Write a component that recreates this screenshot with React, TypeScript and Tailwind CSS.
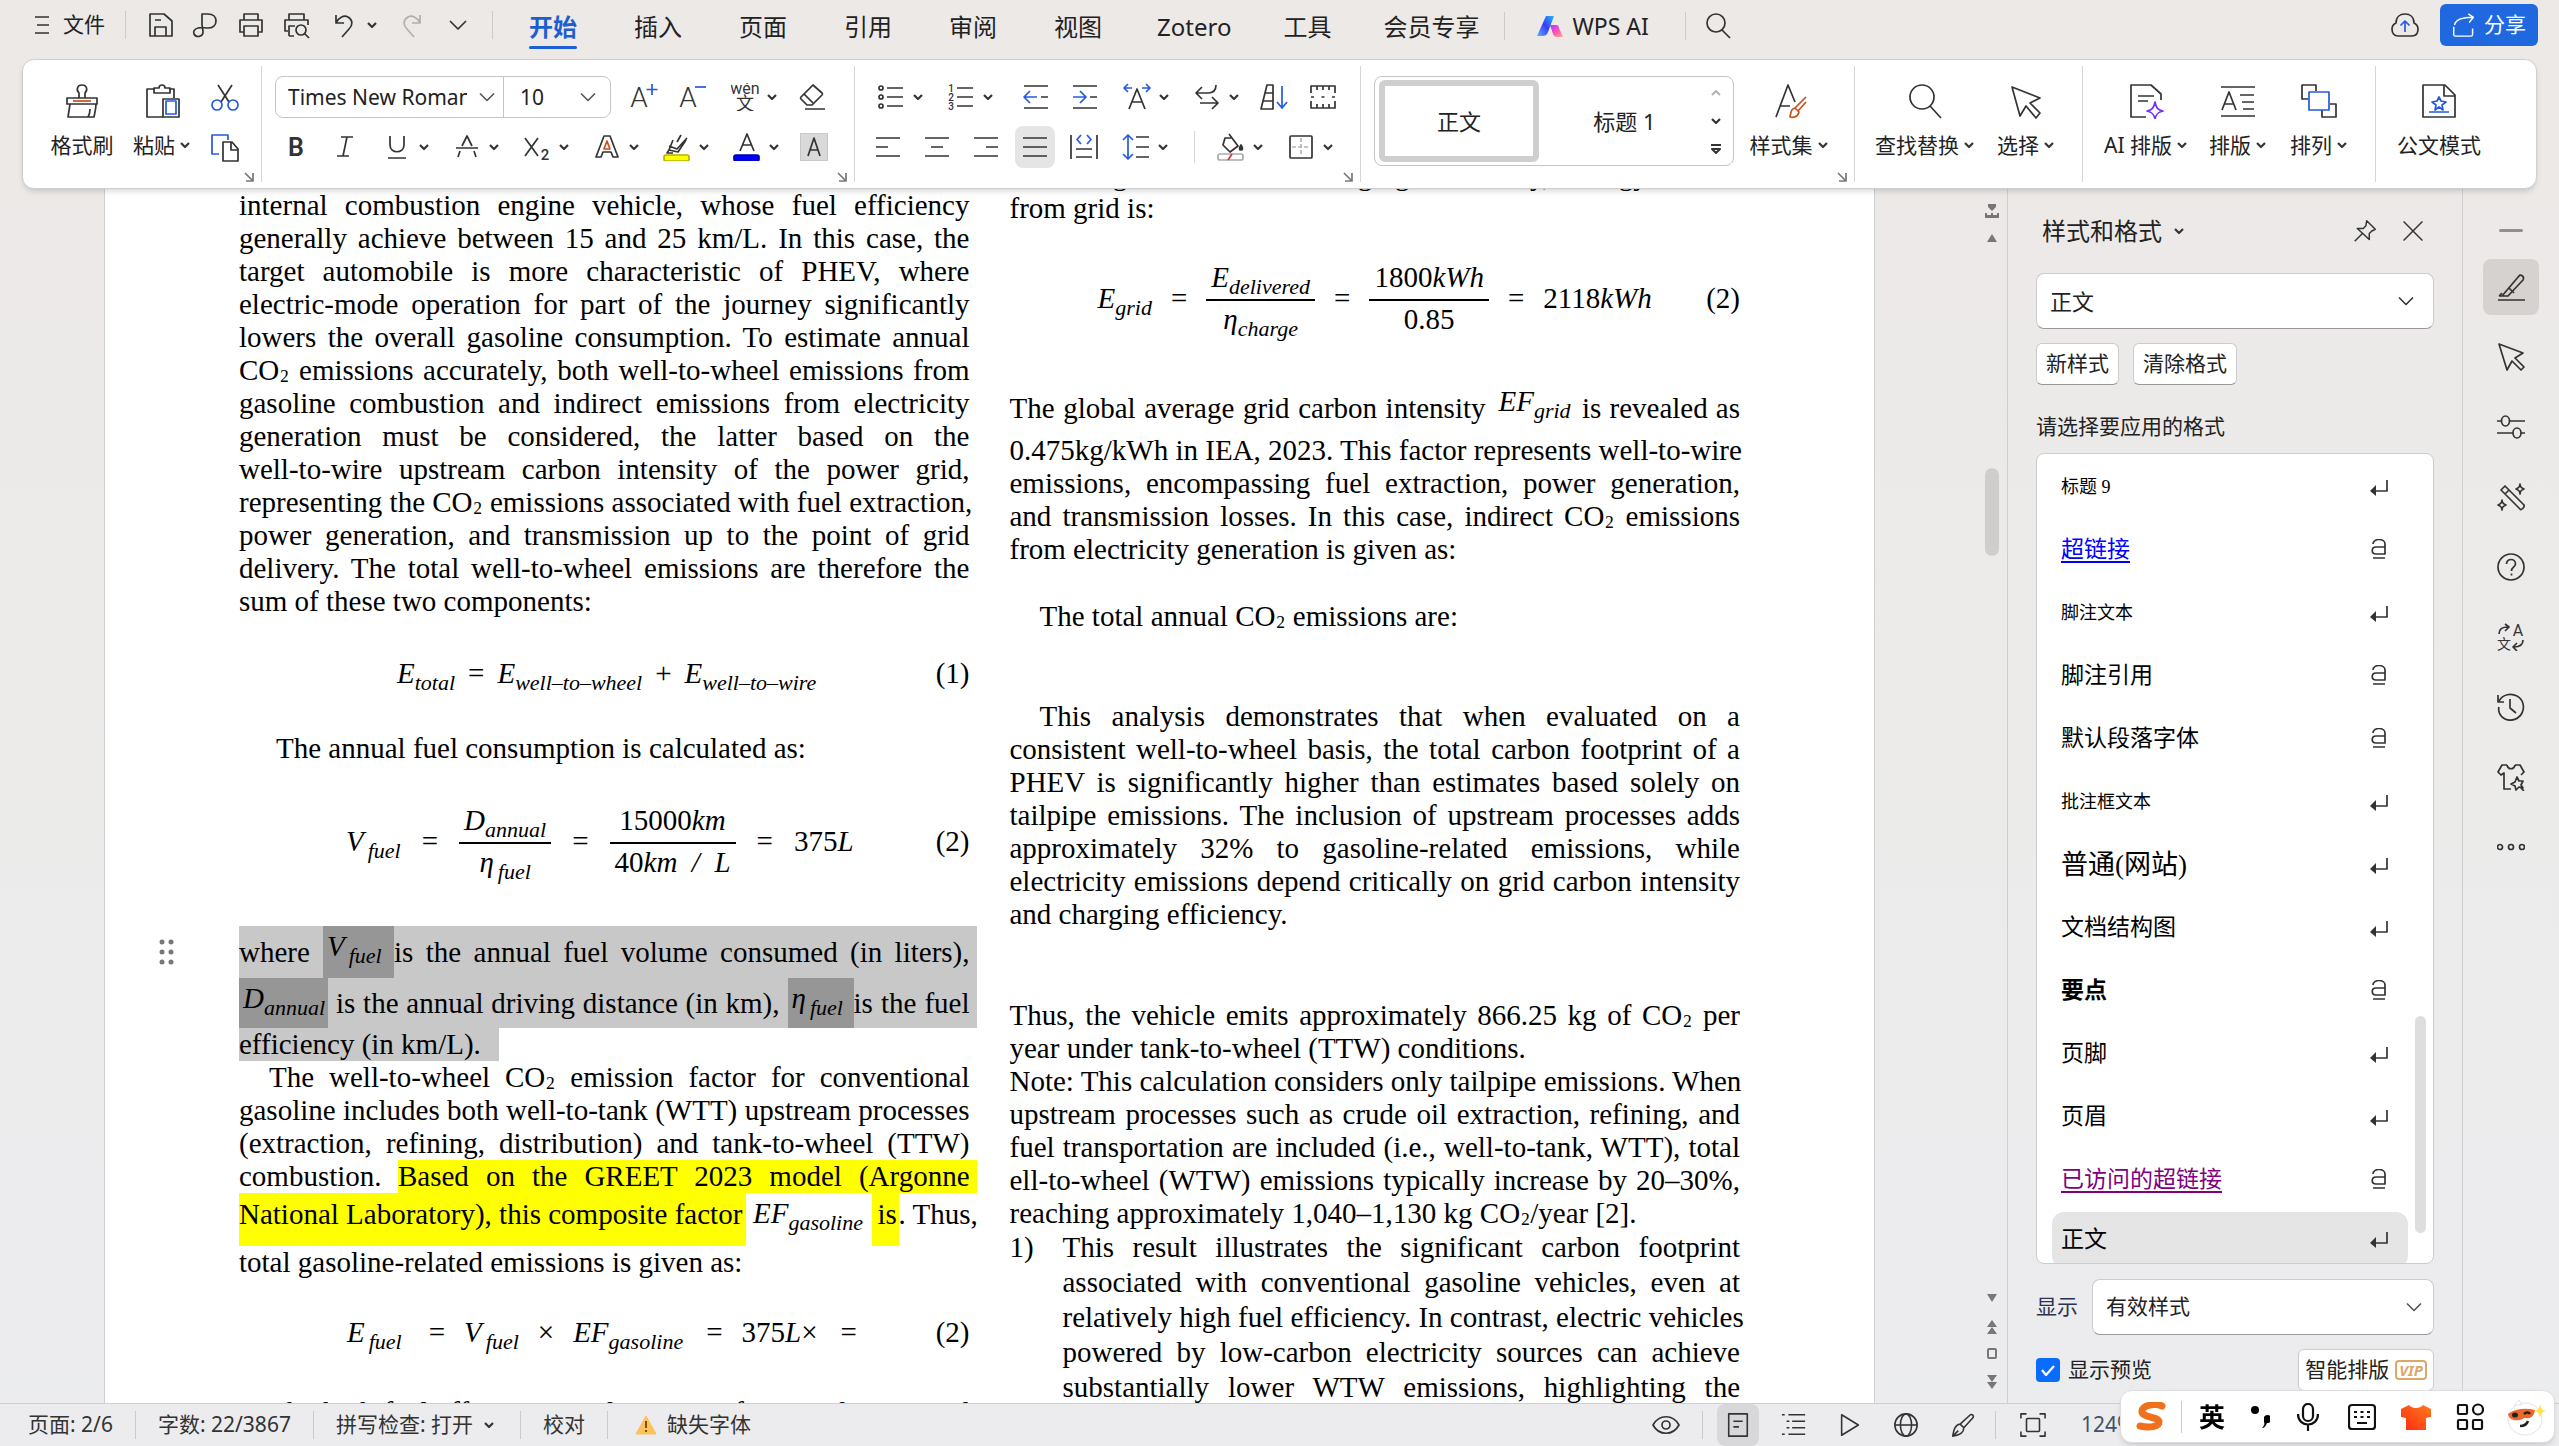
import React from 'react';
import clsx from 'clsx';

const INK = '#333333';
const BLUE = '#2459e0';

interface IconProps {
  children: React.ReactNode;
  box?: number;
  className?: string;
  stroke?: string;
  width?: number;
}

const Icon: React.FC<IconProps> = ({ children, box = 28, className = 'size-7', stroke = INK, width = 1.7 }) => (
  <svg
    viewBox={`0 0 ${box} ${box}`}
    className={clsx('shrink-0', className)}
    fill="none"
    stroke={stroke}
    strokeWidth={width}
    strokeLinejoin="round"
    aria-hidden="true"
  >
    {children}
  </svg>
);

interface GlyphProps {
  x: number;
  y: number;
  size: number;
  weight?: number;
  color?: string;
  children: string;
}

const Glyph: React.FC<GlyphProps> = ({ x, y, size, weight = 400, color = INK, children }) => (
  <text
    x={x}
    y={y}
    fontSize={size}
    fontWeight={weight}
    fill={color}
    stroke="none"
    textAnchor="middle"
    fontFamily="Roboto, 'Noto Sans CJK SC', sans-serif"
  >
    {children}
  </text>
);

const Caret = () => (
  <Icon box={12} className="size-3" width={2.2}>
    <path d="M2 4l4 4 4-4" />
  </Icon>
);

const Chevron = ({ color = '#555555' }: { color?: string }) => (
  <Icon box={16} className="size-4" stroke={color} width={1.6}>
    <path d="M1 4.500l7 7 7-7" />
  </Icon>
);

/* ---------- small toolbar icons ---------- */

const icons = {
  save: (
    <>
      <path d="M3 3h14l8 7v15H3z" />
      <path d="M8 25v-9h11v9M8 9h6" />
    </>
  ),
  brandP: <path d="M11 13V3h6c5 0 8 3 8 7s-3 7-8 7c-4 0-6-1-10 0s-5 4-4 6c2 4 9 3 9-2 0-3-1-5-1-8" />,
  print: (
    <>
      <path d="M7 9V3h14v6M7 21H3V9h22v12h-4" />
      <path d="M7 15h14v10H7z" />
    </>
  ),
  preview: (
    <>
      <path d="M6 9V3h15v6M5 20H2V9h23v5M6 25v-10h6M6 25h5" />
      <circle cx="18" cy="19" r="5" />
      <path d="M21.500 22.500L26 27" />
    </>
  ),
  undo: <path d="M6 4v8h8M6 12c3-6 8-8 12-6 5 3 5 8 1 12l-7 8" />,
  redo: <path d="M22 4v8h-8M22 12C19 6 14 4 10 6c-5 3-5 8-1 12l7 8" />,
  down: <path d="M6 10l8 8 8-8" />,
  search: (
    <>
      <circle cx="12" cy="11" r="9" />
      <path d="M18 18l8 8" />
    </>
  ),
  cut: (
    <>
      <path d="M7 1l11 17M21 1L10 18" />
      <g stroke={BLUE}>
        <circle cx="6" cy="21" r="5" />
        <circle cx="22" cy="21" r="5" />
      </g>
    </>
  ),
  copy: (
    <>
      <path d="M8 20H1V1h16v5" stroke={BLUE} />
      <path d="M12 8h9l6 7v12H12z" />
      <path d="M20 8v8h7" />
    </>
  ),
  grow: (
    <>
      <Glyph x={9} y={24} size={28} weight={300}>A</Glyph>
      <path d="M22 1v11M16.500 6.500h11" stroke={BLUE} />
    </>
  ),
  shrink: (
    <>
      <Glyph x={9} y={24} size={28} weight={300}>A</Glyph>
      <path d="M16 4h11" stroke={BLUE} />
    </>
  ),
  pinyin: (
    <>
      <Glyph x={14} y={11} size={16}>wén</Glyph>
      <Glyph x={14} y={27} size={18}>文</Glyph>
    </>
  ),
  eraser: (
    <>
      <path d="M15 2l9 8c1 1 1 1 0 2L14 22h-5l-6-6c-1-1-1-1 0-2z" />
      <path d="M6 11l9 9M7 26h20" />
    </>
  ),
  bold: <Glyph x={14} y={23} size={25} weight={600}>B</Glyph>,
  italic: <path d="M10 4h12M6 23h12M16 4l-4 19" />,
  underline: <path d="M7 3v9c0 9 14 9 14 0V3M5 25h18" />,
  strike: <path d="M9 13l5-10 5 10M3 15h22M7 18l-2 6M21 18l2 6" />,
  subscript: (
    <>
      <path d="M2 5l13 18M15 5L2 23" />
      <Glyph x={22} y={27} size={15} weight={500}>2</Glyph>
    </>
  ),
  effect: (
    <>
      <path d="M11 3h6l8 21h-5l-2-5H10l-2 5H3z" />
      <path d="M11 16l3-8 3 8z" stroke="#c8501b" />
    </>
  ),
  highlight: (
    <>
      <path d="M6 13l8 3 10-11M10 7L6 17l9 2 8-12M14 9l4-7M6 17l-2 3h6" />
      <rect x="1" y="22" width="25" height="6" rx="2" fill="#ffff00" stroke="#b5b500" />
    </>
  ),
  fontColor: (
    <>
      <path d="M7 18l7-17 7 17M9.500 12h9" />
      <rect x="1" y="22" width="25" height="6" rx="2" fill="#0000ff" stroke="#0000b0" />
    </>
  ),
  shade: (
    <>
      <rect width="28" height="28" rx="1" fill="#d9d9d9" stroke="#c4c4c4" />
      <path d="M8 23l6-18 6 18M10 17h8" />
    </>
  ),
  bullets: (
    <>
      <circle cx="4" cy="5" r="2" />
      <circle cx="4" cy="14" r="2" />
      <circle cx="4" cy="23" r="2" />
      <path d="M10 5h16M10 14h16M10 23h16" />
    </>
  ),
  numbers: (
    <>
      <Glyph x={4} y={9} size={10} weight={500}>1</Glyph>
      <Glyph x={4} y={18} size={10} weight={500}>2</Glyph>
      <Glyph x={4} y={27} size={10} weight={500}>3</Glyph>
      <path d="M10 5h16M10 14h16M10 23h16" />
    </>
  ),
  outdent: (
    <>
      <path d="M2 3h24M2 25h24M19 14h7" />
      <path d="M15 14H3M8 8l-6 6 6 6" stroke={BLUE} />
    </>
  ),
  indent: (
    <>
      <path d="M2 3h24M2 25h24M19 14h7" />
      <path d="M2 14h12M9 8l6 6-6 6" stroke={BLUE} />
    </>
  ),
  stretch: (
    <>
      <path d="M6 26l8-20 8 20M9 19h10" />
      <path d="M1 5h8M5 1L1 5l4 4M27 5h-8M23 1l4 4-4 4" stroke={BLUE} />
    </>
  ),
  direction: <path d="M23 2c0 6-3 8-8 8H4M9 4l-6 6 6 6M7 20h17M19 14l6 6-6 6" />,
  sort: (
    <>
      <path d="M1 26L7 2h6v24zM5 10h8M3 18h10" />
      <path d="M22 3v22M17 19l5 6 5-6" stroke={BLUE} />
    </>
  ),
  ruler: (
    <>
      <path d="M2 10V3h24v7M2 18v7h24v-7M8 3v4M14 3v4M20 3v4M8 25v-4M14 25v-4M20 25v-4" />
      <path d="M2 14h3M12.500 14h3M23 14h3" />
    </>
  ),
  left: <path d="M2 5h24M2 14h12M2 23h24" />,
  center: <path d="M2 5h24M8 14h12M2 23h24" />,
  right: <path d="M2 5h24M14 14h12M2 23h24" />,
  justify: <path d="M2 5h24M2 14h24M2 23h24" />,
  distribute: (
    <>
      <path d="M1 2v24M27 2v24M6 16h16M6 24h16" />
      <path d="M11 2L7 6.500l4 4.500M17 2l4 4.500-4 4.500" stroke={BLUE} />
    </>
  ),
  spacing: (
    <>
      <path d="M14 4h13M14 14h13M14 24h13" />
      <path d="M6 2v24M1 7l5-5 5 5M1 21l5 5 5-5" stroke={BLUE} />
    </>
  ),
  fill: (
    <>
      <path d="M8 5h7l6 8-8 6-7-7zM12 1l3 4" />
      <path d="M24 12c2 3 2 5 0 5s-2-2 0-5z" fill={INK} />
      <rect x="1" y="21" width="25" height="6" rx="2" stroke="#aaaaaa" />
      <path d="M11 27l4-6" stroke="#d33333" />
    </>
  ),
  border: (
    <>
      <rect x="3" y="3" width="22" height="22" rx="1" />
      <path d="M14 5v18M5 14h18" stroke="#b5b5b5" strokeDasharray="4 2" />
    </>
  ),
};

type IconName = keyof typeof icons;

/* ---------- ribbon ---------- */

interface ToolProps {
  name: IconName;
  label: string;
  caret?: boolean;
  active?: boolean;
}

const Tool: React.FC<ToolProps> = ({ name, label, caret, active }) =>
  caret ? (
    <button type="button" aria-label={label} className="flex h-[42px] w-[70px] shrink-0 items-center gap-[7px] pl-[14px]">
      <Icon>{icons[name]}</Icon>
      <Caret />
    </button>
  ) : (
    <button type="button" aria-label={label} className="flex h-[42px] w-[49px] shrink-0 items-center justify-center">
      <span className={clsx('flex h-[42px] w-10 items-center justify-center rounded-lg', active && 'bg-[#e5e5e5]')}>
        <Icon>{icons[name]}</Icon>
      </span>
    </button>
  );

interface BigToolProps {
  label: string;
  caret?: boolean;
  className?: string;
  children: React.ReactNode;
}

const BigTool: React.FC<BigToolProps> = ({ label, caret, className, children }) => (
  <button type="button" className={clsx('flex shrink-0 flex-col items-center gap-2', className)}>
    <Icon box={36} className="size-9">{children}</Icon>
    <span className="flex items-center gap-1 whitespace-nowrap leading-[36px]">
      {label}
      {caret && <Caret />}
    </span>
  </button>
);

const Launcher = () => (
  <button type="button" aria-label="更多设置" className="absolute right-2 bottom-[6px]">
    <Icon box={10} className="size-[10px]" stroke="#777777">
      <path d="M1 1l7 7M9 1v8H2" />
    </Icon>
  </button>
);

const Group: React.FC<{ children: React.ReactNode; className?: string; launcher?: boolean }> = ({
  children,
  className,
  launcher,
}) => (
  <div className="relative flex shrink-0">
    <div className={clsx('flex', className)}>{children}</div>
    {launcher && <Launcher />}
    <div className="my-[6px] w-px bg-[#d5d5d5]" />
  </div>
);

const Ribbon = () => (
  <section
    aria-label="开始"
    className="relative z-10 mx-[22px] flex h-[130px] shrink-0 rounded-xl border border-[#cfcfcf] bg-white text-[21px] text-[#222222] shadow-md"
  >
    <Group className="w-[238px] pt-[23px] pl-6" launcher>
      <BigTool label="格式刷" className="w-[70px]">
        <path d="M15 15V10c-3-3-2-8 3-8s6 5 3 8v5M3 15h30v6H3zM6 21L4 34h26c1-5 2-9 2-13M24 34c2-3 2-5 2-8" />
        <path d="M9 18h18" stroke="#c8501b" />
      </BigTool>
      <BigTool label="粘贴" caret className="ml-[7px] w-[76px]">
        <path d="M11 6H3v28h16M25 6h5v9" />
        <path d="M10 10V5h5c0-4 6-4 6 0h5v5z" />
        <path d="M19 16h16v18H19z" />
        <rect x="22" y="18" width="10" height="13" stroke={BLUE} />
      </BigTool>
      <div className="-mt-[6px] flex flex-col gap-2">
        <Tool name="cut" label="剪切" />
        <Tool name="copy" label="复制" />
      </div>
    </Group>

    <Group className="w-[592px] flex-col gap-2 pt-[16px] pl-[9px]" launcher>
      <div className="flex items-center">
        <div className="mr-2 ml-1 flex h-[42px] w-[336px] items-center rounded-lg border border-[#c4c4c4]">
          <input
            aria-label="字体"
            defaultValue="Times New Roman"
            className="mr-1 ml-3 h-full w-[179px] bg-transparent outline-none"
          />
          <span className="ml-2">
            <Chevron />
          </span>
          <span className="ml-2 h-full w-px bg-[#c4c4c4]" />
          <input aria-label="字号" defaultValue="10" className="ml-4 h-full w-14 bg-transparent outline-none" />
          <span className="ml-1">
            <Chevron />
          </span>
        </div>
        <Tool name="grow" label="增大字号" />
        <Tool name="shrink" label="减小字号" />
        <Tool name="pinyin" label="拼音指南" caret />
        <Tool name="eraser" label="清除格式" />
      </div>
      <div className="flex items-center">
        <Tool name="bold" label="加粗" />
        <Tool name="italic" label="倾斜" />
        <Tool name="underline" label="下划线" caret />
        <Tool name="strike" label="删除线" caret />
        <Tool name="subscript" label="下标" caret />
        <Tool name="effect" label="文字效果" caret />
        <Tool name="highlight" label="突出显示" caret />
        <Tool name="fontColor" label="字体颜色" caret />
        <Tool name="shade" label="字符底纹" />
      </div>
    </Group>

    <Group className="w-[505px] flex-col gap-2 pt-[16px] pl-2" launcher>
      <div className="flex items-center">
        <Tool name="bullets" label="项目符号" caret />
        <Tool name="numbers" label="编号" caret />
        <span className="w-2" />
        <Tool name="outdent" label="减少缩进量" />
        <Tool name="indent" label="增加缩进量" />
        <Tool name="stretch" label="中文版式" caret />
        <Tool name="direction" label="换行" caret />
        <Tool name="sort" label="排序" />
        <Tool name="ruler" label="制表位" />
      </div>
      <div className="flex items-center">
        <Tool name="left" label="左对齐" />
        <Tool name="center" label="居中" />
        <Tool name="right" label="右对齐" />
        <Tool name="justify" label="两端对齐" active />
        <Tool name="distribute" label="分散对齐" />
        <Tool name="spacing" label="行距" caret />
        <span className="mr-2 ml-4 h-8 w-px bg-[#d5d5d5]" />
        <Tool name="fill" label="底纹颜色" caret />
        <Tool name="border" label="边框" caret />
      </div>
    </Group>

    <Group className="w-[493px] pt-[16px] pl-[13px]" launcher>
      <div className="flex h-[90px] w-[360px] items-center rounded-lg border border-[#c4c4c4] pl-1">
        <button type="button" className="h-[82px] w-[160px] rounded-md border-[6px] border-[#cfcfcf] text-[22px]">
          正文
        </button>
        <button type="button" className="w-[171px] text-[22px]">标题 1</button>
        <div className="flex h-full flex-col items-center justify-between py-[10px]">
          <Icon box={12} className="size-3" stroke="#b5b5b5" width={2.2}>
            <path d="M2 8l4-4 4 4" />
          </Icon>
          <Caret />
          <Icon box={12} className="size-3" width={2}>
            <path d="M1 2h10M2 6h8l-4 4z" />
          </Icon>
        </div>
      </div>
      <BigTool label="样式集" caret className="ml-[10px] w-[90px] pt-[7px]">
        <path d="M5 34L17 2l7 17M9 23h10" />
        <path d="M35 14L24 25M35 19L27 28M24 25l4 4c-1 4-4 6-9 5 1-5 1-8 5-9z" stroke="#c8501b" />
      </BigTool>
    </Group>

    <Group className="w-[227px] pt-[23px] pl-[17px]">
      <BigTool label="查找替换" caret className="w-[106px]">
        <circle cx="15" cy="14" r="12" />
        <path d="M23 23l11 12" />
      </BigTool>
      <BigTool label="选择" caret className="ml-[13px] w-[70px]">
        <path d="M4 4l28 11-10 5 10 10-4 5-10-12-6 10z" />
      </BigTool>
    </Group>

    <Group className="w-[292px] pt-[23px] pl-4">
      <BigTool label="AI 排版" caret className="w-[94px]">
        <path d="M18 34H3V2h20l10 9v6M10 13h16M10 18h10" />
        <path d="M27 19c1 6 3 8 8 9-5 1-7 3-8 8-1-5-3-7-8-8 5-1 7-3 8-9z" stroke="#7a2cf0" />
      </BigTool>
      <BigTool label="排版" caret className="ml-[10px] w-[70px]">
        <path d="M1 4h34M1 33h34M20 12h14M22 19h12M23 26h11M2 27L9 9l7 18M5 21h8" />
      </BigTool>
      <BigTool label="排列" caret className="ml-[9px] w-[74px]">
        <path d="M7 16H1V2h14v6M29 21h6v13H21v-7" />
        <rect x="8" y="9" width="20" height="18" stroke={BLUE} />
      </BigTool>
    </Group>

    <div className="flex flex-1 pt-[23px] pl-[19px]">
      <BigTool label="公文模式" className="w-[88px]">
        <path d="M2 2h22l10 10v22H2zM23 2v11h11" />
        <path d="M18 14l2 4 5 1-4 3 1 5-4-3-4 3 1-5-4-3 5-1zM8 29h20" stroke={BLUE} />
      </BigTool>
    </div>
  </section>
);

/* ---------- title bar ---------- */

const VLine = ({ className }: { className?: string }) => (
  <span className={clsx('h-7 w-px shrink-0 bg-[#cbcbcb]', className)} />
);

interface QuickButtonProps {
  name: IconName;
  label: string;
  className?: string;
  color?: string;
}

const QuickButton: React.FC<QuickButtonProps> = ({ name, label, className, color }) => (
  <button type="button" aria-label={label} className={className}>
    <Icon stroke={color}>{icons[name]}</Icon>
  </button>
);

const tabs = ['开始', '插入', '页面', '引用', '审阅', '视图', 'Zotero', '工具', '会员专享'];

const TitleBar = () => (
  <header className="flex h-[59px] shrink-0 items-start text-[#222222]">
    <div className="flex h-[50px] items-center">
      <button type="button" className="ml-[34px] flex items-center gap-[13px] text-[21px]">
        <Icon box={16} className="size-4 overflow-visible" width={1.7}>
          <path d="M1 0h14M3 8h12M1 16h14" />
        </Icon>
        文件
      </button>
      <VLine className="ml-5" />
      <QuickButton name="save" label="保存" className="ml-[21px]" />
      <QuickButton name="brandP" label="输出为PDF" className="ml-4" />
      <QuickButton name="print" label="打印" className="ml-[18px]" />
      <QuickButton name="preview" label="打印预览" className="ml-[18px]" />
      <QuickButton name="undo" label="撤销" className="ml-[19px]" />
      <span className="ml-2">
        <Caret />
      </span>
      <QuickButton name="redo" label="恢复" className="ml-5" color="#b0b0b0" />
      <QuickButton name="down" label="自定义快速访问工具栏" className="ml-[18px]" />
      <VLine className="ml-[20px]" />
    </div>
    <nav className="flex pl-[7px]">
      {tabs.map((tab, i) => (
        <button
          key={tab}
          type="button"
          className={clsx('flex flex-col items-center pt-2', i < 6 ? 'pr-[28px] pl-[29px]' : 'pr-[25px] pl-[27px]')}
        >
          <span className={clsx('text-[24px] leading-[38px]', i === 0 && 'font-bold text-[#1d5fd0]')}>{tab}</span>
          {i === 0 && <span className="h-[3px] w-full rounded-full bg-[#1d5fd0]" />}
        </button>
      ))}
    </nav>
    <div className="flex h-[52px] items-center">
      <VLine />
      <button type="button" className="ml-[31px] flex items-center gap-2 text-[23px]">
        <svg viewBox="0 0 28 22" className="h-[22px] w-7" aria-hidden="true">
          <defs>
            <linearGradient id="aiLeft" x1="1" y1="0" x2="0" y2="1">
              <stop offset="0" stopColor="#22b8ff" />
              <stop offset="0.500" stopColor="#3a3cf5" />
              <stop offset="1" stopColor="#5db2ff" />
            </linearGradient>
            <linearGradient id="aiRight" x1="0" y1="0" x2="1" y2="1">
              <stop offset="0" stopColor="#a63cf8" />
              <stop offset="0.500" stopColor="#ff4fc0" />
              <stop offset="1" stopColor="#ffb27a" />
            </linearGradient>
          </defs>
          <path d="M10 1h8l-6 16c-1 3-3 4-6 4H1z" fill="url(#aiLeft)" />
          <path d="M14 10h6c2 0 3 1 3 3l4 9h-6c-2 0-3-1-4-3z" fill="url(#aiRight)" />
        </svg>
        WPS AI
      </button>
      <VLine className="ml-[36px]" />
      <QuickButton name="search" label="搜索" className="ml-[18px]" />
    </div>
    <div className="mt-1 mr-[21px] ml-auto flex h-[42px] items-center gap-[21px]">
      <button type="button" aria-label="云同步">
        <Icon>
          <path d="M7 25c-4 0-6-3-6-7 0-3 2-5 4-6 0-6 4-9 9-9s9 3 9 9c2 1 4 3 4 6 0 4-2 7-6 7z" />
          <path d="M14 21V10M9.500 14.500L14 10l4.500 4.500" stroke={BLUE} />
        </Icon>
      </button>
      <button type="button" className="flex h-[42px] w-[98px] items-center justify-center gap-2 rounded-md bg-[#1f68e0] text-[21px] text-white">
        <Icon className="size-6" stroke="#ffffff">
          <path d="M2 16v9c0 1 1 2 2 2h18c1 0 2-1 2-2v-7M3 14c1-6 8-9 22-9M19 1l6 4-5 6" />
        </Icon>
        分享
      </button>
    </div>
  </header>
);

/* ---------- document ---------- */

// The small two in CO₂ sits on the baseline instead of hanging below it.
const withCo2 = (text: string) =>
  text.split('₂').map((part, i) => (
    <React.Fragment key={i}>
      {i > 0 && <span className="relative -top-1">₂</span>}
      {part}
    </React.Fragment>
  ));

const Line: React.FC<{ children: React.ReactNode; last?: boolean; indent?: boolean; className?: string }> = ({
  children,
  last,
  indent,
  className,
}) => (
  <span className={clsx('block whitespace-nowrap', !last && 'text-justify [text-align-last:justify]', indent && 'pl-[30px]', className)}>
    {typeof children === 'string' ? withCo2(children) : children}
  </span>
);

const Lines: React.FC<{ rows: string[]; indent?: boolean; open?: boolean; className?: string }> = ({
  rows,
  indent,
  open,
  className,
}) => (
  <p className={className}>
    {rows.map((row, i) => (
      <Line key={row} indent={indent && i === 0} last={!open && i === rows.length - 1}>
        {row}
      </Line>
    ))}
  </p>
);

const Sym: React.FC<{ base: string; sub?: string; wide?: boolean }> = ({ base, sub, wide }) => (
  <span className="whitespace-nowrap italic">
    {base}
    {sub && <sub className={clsx('bottom-[-7px] text-[22px]', wide && 'ml-1')}>{sub}</sub>}
  </span>
);

const Frac: React.FC<{ top: React.ReactNode; bottom: React.ReactNode }> = ({ top, bottom }) => (
  <span className="flex flex-col items-center">
    <span className="px-[5px] pb-[5px]">{top}</span>
    <span className="h-[2px] w-full bg-black" />
    <span className="px-[5px] pt-[2px]">{bottom}</span>
  </span>
);

const Equation: React.FC<{ n: number; className: string; children: React.ReactNode }> = ({ n, className, children }) => (
  <div className={clsx('flex items-center', className)}>
    {children}
    <span className="ml-auto">({n})</span>
  </div>
);

const LeftColumn = () => (
  <div className="min-w-0">
    <Lines
      rows={[
        'internal combustion engine vehicle, whose fuel efficiency',
        'generally achieve between 15 and 25 km/L. In this case, the',
        'target automobile is more characteristic of PHEV, where',
        'electric-mode operation for part of the journey significantly',
        'lowers the overall gasoline consumption. To estimate annual',
        'CO₂ emissions accurately, both well-to-wheel emissions from',
        'gasoline combustion and indirect emissions from electricity',
        'generation must be considered, the latter based on the',
        'well-to-wire upstream carbon intensity of the power grid,',
        'representing the CO₂ emissions associated with fuel extraction,',
        'power generation, and transmission up to the point of grid',
        'delivery. The total well-to-wheel emissions are therefore the',
        'sum of these two components:',
      ]}
    />
    <Equation n={1} className="h-[114px] gap-[13px] pb-1 pl-[158px]">
      <Sym base="E" sub="total" />
      <span>=</span>
      <Sym base="E" sub="well–to–wheel" />
      <span>+</span>
      <Sym base="E" sub="well–to–wire" />
    </Equation>
    <p className="pl-[37px]">The annual fuel consumption is calculated as:</p>
    <Equation n={2} className="h-[161px] gap-[21px] pb-2 pl-[107px]">
      <Sym base="V" sub="fuel" wide />
      <span>=</span>
      <Frac top={<Sym base="D" sub="annual" />} bottom={<Sym base="η" sub="fuel" wide />} />
      <span>=</span>
      <Frac
        top={<>15000<i>km</i></>}
        bottom={<>40<i>km&nbsp; /&nbsp; L</i></>}
      />
      <span>=</span>
      <span>375<i>L</i></span>
    </Equation>

    <div className="relative -mr-[7px]">
      <button type="button" aria-label="段落" className="absolute top-3 -left-[80px]">
        <svg viewBox="0 0 16 28" className="h-7 w-4 fill-[#777777]" aria-hidden="true">
          <circle cx="3" cy="4" r="2.500" />
          <circle cx="12" cy="4" r="2.500" />
          <circle cx="3" cy="14" r="2.500" />
          <circle cx="12" cy="14" r="2.500" />
          <circle cx="3" cy="24" r="2.500" />
          <circle cx="12" cy="24" r="2.500" />
        </svg>
      </button>
      <div className="flex h-[52px] bg-[#c8c8c8]">
        <span className="w-[84px] pt-[10px]">where</span>
        <span className="w-[71px] bg-[#969696] pt-1 pl-1">
          <Sym base="V" sub="fuel" wide />
        </span>
        <Line className="flex-1 pt-[10px] pr-[7px]">is the annual fuel volume consumed (in liters),</Line>
      </div>
      <div className="flex h-[50px] bg-[#c8c8c8]">
        <span className="w-[89px] bg-[#969696] pt-1 pl-1">
          <Sym base="D" sub="annual" />
        </span>
        <Line className="flex-1 pt-[9px] pr-2 pl-2">is the annual driving distance (in km),</Line>
        <span className="w-[66px] bg-[#969696] pt-1 pl-1">
          <Sym base="η" sub="fuel" wide />
        </span>
        <Line className="w-[123px] pt-[9px] pr-[7px]">is the fuel</Line>
      </div>
      <p className="w-[260px] whitespace-nowrap bg-[#c8c8c8]">efficiency (in km/L).</p>
    </div>

    <Lines
      indent
      open
      rows={[
        'The well-to-wheel CO₂ emission factor for conventional',
        'gasoline includes both well-to-tank (WTT) upstream processes',
        '(extraction, refining, distribution) and tank-to-wheel (TTW)',
      ]}
    />
    <div className="-mr-[7px] flex">
      <span className="w-[159px]">combustion.</span>
      <mark className="flex-1 bg-[#ffff00] pr-[7px] text-black">
        <Line>Based on the GREET 2023 model (Argonne</Line>
      </mark>
    </div>
    <div className="-mr-[7px] flex h-[53px] whitespace-nowrap">
      <mark className="w-[507px] bg-[#ffff00] pt-[5px] text-black">National Laboratory), this composite factor</mark>
      <span className="flex-1 pt-1 pl-[7px]">
        <Sym base="EF" sub="gasoline" />
      </span>
      <mark className="w-[27px] bg-[#ffff00] pt-[5px] pl-[6px] text-black">is</mark>
      <span className="w-[78px] pt-[5px]">. Thus,</span>
    </div>
    <p>total gasoline-related emissions is given as:</p>
    <Equation n={2} className="h-[117px] gap-[19px] pb-[10px] pl-[108px]">
      <Sym base="E" sub="fuel" wide />
      <span className="ml-2">=</span>
      <Sym base="V" sub="fuel" wide />
      <span>×</span>
      <Sym base="EF" sub="gasoline" />
      <span className="ml-1">=</span>
      <span>375<i>L</i>×</span>
      <span className="ml-1">=</span>
    </Equation>
    <Line indent>The high fuel efficiency implies a significant reduction and</Line>
  </div>
);

const RightColumn = () => (
  <div className="-mt-[30px] min-w-0">
    <Lines rows={['Assuming an onboard charging efficiency, energy drawn', 'from grid is:']} />
    <Equation n={2} className="h-[157px] gap-[19px] pb-[11px] pl-[88px]">
      <Sym base="E" sub="grid" />
      <span>=</span>
      <Frac top={<Sym base="E" sub="delivered" />} bottom={<Sym base="η" sub="charge" />} />
      <span>=</span>
      <Frac top={<>1800<i>kWh</i></>} bottom="0.85" />
      <span>=</span>
      <span>2118<i>kWh</i></span>
    </Equation>
    <div className="flex h-[52px] whitespace-nowrap">
      <Line className="w-[476px] pt-[10px]">The global average grid carbon intensity</Line>
      <span className="flex-1 pt-[3px] pl-[13px]">
        <Sym base="EF" sub="grid" />
      </span>
      <Line className="w-[158px] pt-[10px]">is revealed as</Line>
    </div>
    <Lines
      rows={[
        '0.475kg/kWh in IEA, 2023. This factor represents well-to-wire',
        'emissions, encompassing fuel extraction, power generation,',
        'and transmission losses. In this case, indirect CO₂ emissions',
        'from electricity generation is given as:',
      ]}
    />
    <p className="mt-[34px] pl-[30px]">{withCo2('The total annual CO₂ emissions are:')}</p>
    <Lines
      className="mt-[67px]"
      indent
      rows={[
        'This analysis demonstrates that when evaluated on a',
        'consistent well-to-wheel basis, the total carbon footprint of a',
        'PHEV is significantly higher than estimates based solely on',
        'tailpipe emissions. The inclusion of upstream processes adds',
        'approximately 32% to gasoline-related emissions, while',
        'electricity emissions depend critically on grid carbon intensity',
        'and charging efficiency.',
      ]}
    />
    <Lines
      className="mt-[68px]"
      rows={['Thus, the vehicle emits approximately 866.25 kg of CO₂ per', 'year under tank-to-wheel (TTW) conditions.']}
    />
    <Lines
      rows={[
        'Note: This calculation considers only tailpipe emissions. When',
        'upstream processes such as crude oil extraction, refining, and',
        'fuel transportation are included (i.e., well-to-tank, WTT), total',
        'ell-to-wheel (WTW) emissions typically increase by 20–30%,',
        'reaching approximately 1,040–1,130 kg CO₂/year [2].',
      ]}
    />
    <div className="flex leading-[35px]">
      <span className="w-[53px] shrink-0">1)</span>
      <Lines
        className="min-w-0 flex-1"
        open
        rows={[
          'This result illustrates the significant carbon footprint',
          'associated with conventional gasoline vehicles, even at',
          'relatively high fuel efficiency. In contrast, electric vehicles',
          'powered by low-carbon electricity sources can achieve',
          'substantially lower WTW emissions, highlighting the',
        ]}
      />
    </div>
  </div>
);

const ScrollTrack = () => (
  <div className="flex w-[132px] shrink-0 flex-col items-end pr-2">
    <div className="flex h-full w-[14px] flex-col items-center fill-[#777777]">
      <svg viewBox="0 0 14 14" className="mt-[15px] h-[14px] w-[14px]" aria-hidden="true">
        <path d="M3 0h8v3L7 7 3 3zM0 9h2v2h4V9h2v2h4V9h2v5H0z" />
      </svg>
      <svg viewBox="0 0 10 8" className="mt-4 h-2 w-[10px]" aria-hidden="true">
        <path d="M5 0l5 8H0z" />
      </svg>
      <div className="mt-[226px] h-[88px] w-[14px] rounded-full bg-[#cfcecd]" />
      <svg viewBox="0 0 10 8" className="mt-auto h-2 w-[10px]" aria-hidden="true">
        <path d="M5 8L0 0h10z" />
      </svg>
      <svg viewBox="0 0 10 14" className="mt-[18px] h-[14px] w-[10px]" aria-hidden="true">
        <path d="M5 0l5 7H0zM5 7l5 7H0z" />
      </svg>
      <span className="mt-[14px] h-[11px] w-[10px] rounded-xs border-2 border-[#777777]" />
      <svg viewBox="0 0 10 14" className="mt-4 mb-[14px] h-[14px] w-[10px]" aria-hidden="true">
        <path d="M5 7L0 0h10zM5 14L0 7h10z" />
      </svg>
    </div>
  </div>
);

/* ---------- style pane ---------- */

interface StyleItem {
  name: string;
  kind: 'para' | 'char';
  look: string;
}

const styleItems: StyleItem[] = [
  { name: '标题 9', kind: 'para', look: 'text-[18px]' },
  { name: '超链接', kind: 'char', look: 'text-[23px] text-[#0000ff] underline underline-offset-4' },
  { name: '脚注文本', kind: 'para', look: 'text-[18px]' },
  { name: '脚注引用', kind: 'char', look: 'text-[23px]' },
  { name: '默认段落字体', kind: 'char', look: 'text-[23px]' },
  { name: '批注框文本', kind: 'para', look: 'text-[18px]' },
  { name: '普通(网站)', kind: 'para', look: 'text-[27px]' },
  { name: '文档结构图', kind: 'para', look: 'text-[23px]' },
  { name: '要点', kind: 'char', look: 'text-[23px] font-bold' },
  { name: '页脚', kind: 'para', look: 'text-[23px]' },
  { name: '页眉', kind: 'para', look: 'text-[23px]' },
  { name: '已访问的超链接', kind: 'char', look: 'text-[23px] text-[#800080] underline underline-offset-4' },
  { name: '正文', kind: 'para', look: 'text-[23px]' },
];

const ParaMark = () => (
  <Icon box={20} className="size-5">
    <path d="M18 2v11H6" />
    <path d="M7 7v11l-6-5z" fill={INK} stroke="none" />
  </Icon>
);

const CharMark = () => (
  <Icon box={20} className="mb-1 size-5">
    <path d="M4 5c0-6 12-6 12 0v10H7c-5 0-5-7 0-7h9M4 19h12" />
  </Icon>
);

const fieldCls = 'appearance-none rounded-lg border border-[#cccccc] border-b-[#999999] bg-white px-[13px] outline-none';

const StylePane = () => (
  <aside className="flex w-[456px] shrink-0 flex-col border-x border-[#cfcfcf] pr-7 pl-7 text-[21px] text-[#222222]">
    <div className="mt-[22px] flex h-10 items-center">
      <h2 className="ml-[6px] text-[24px]">样式和格式</h2>
      <span className="ml-[11px]">
        <Caret />
      </span>
      <button type="button" aria-label="固定" className="ml-auto">
        <Icon className="size-6">
          <path d="M16 2l10 10-4 2-3 3v7L5 11h7l3-3zM11 17l-9 9" />
        </Icon>
      </button>
      <button type="button" aria-label="关闭" className="mr-[9px] ml-6">
        <Icon className="size-6">
          <path d="M3 3l22 22M25 3L3 25" />
        </Icon>
      </button>
    </div>

    <div className="relative mt-[22px]">
      <select aria-label="当前样式" className={clsx(fieldCls, 'h-[56px] w-full text-[22px]')}>
        <option>正文</option>
      </select>
      <span className="pointer-events-none absolute top-5 right-5">
        <Chevron color={INK} />
      </span>
    </div>

    <div className="mt-[14px] flex gap-[14px]">
      {['新样式', '清除格式'].map((t) => (
        <button key={t} type="button" className="h-[42px] rounded-md border border-[#cccccc] border-b-[#999999] bg-white px-[9px]">
          {t}
        </button>
      ))}
    </div>

    <p className="mt-[25px] leading-8">请选择要应用的格式</p>

    <div className="relative mt-[11px] h-[811px] overflow-hidden rounded-lg border border-[#cccccc] bg-white pt-[2px]">
      <ul className="h-full overflow-hidden pr-[25px] pl-[15px] text-black">
        {styleItems.map((item) => (
          <li key={item.name}>
            <button
              type="button"
              className={clsx(
                'flex w-full items-center justify-between rounded-xl pr-[19px] pl-[9px]',
                item.name === '正文' ? 'h-[56px] bg-[#e5e5e5]' : 'h-[63px]',
              )}
            >
              <span className={clsx("font-['Liberation_Serif','Noto_Sans_CJK_SC',serif]", item.look)}>{item.name}</span>
              {item.kind === 'para' ? <ParaMark /> : <CharMark />}
            </button>
          </li>
        ))}
      </ul>
      <div className="absolute top-[562px] right-[7px] h-[217px] w-[11px] rounded-full bg-[#dedede]" />
    </div>

    <div className="relative mt-[15px] flex items-center justify-between">
      <label htmlFor="shown-styles" className="text-[#2b3350]">显示</label>
      <select id="shown-styles" className={clsx(fieldCls, 'h-[56px] w-[342px]')}>
        <option>有效样式</option>
      </select>
      <span className="pointer-events-none absolute top-5 right-3">
        <Chevron />
      </span>
    </div>

    <div className="mt-[14px] flex h-[42px] items-center justify-between">
      <label className="flex items-center gap-2">
        <span className="relative flex size-6">
          <input type="checkbox" defaultChecked className="size-6 appearance-none rounded-sm bg-[#0a6cff]" />
          <span className="pointer-events-none absolute inset-1">
            <Icon box={16} className="size-4" stroke="#ffffff" width={2.2}>
              <path d="M2 8l4 5 8-9" />
            </Icon>
          </span>
        </span>
        显示预览
      </label>
      <button type="button" className="flex h-[42px] items-center gap-[6px] rounded-md border border-[#cccccc] bg-white px-[6px]">
        智能排版
        <span className="rounded-sm border-2 border-[#dca868] px-[2px] text-[15px] leading-4 font-bold text-[#dca868] italic">VIP</span>
      </button>
    </div>
  </aside>
);

/* ---------- right rail ---------- */

const railIcons: { label: string; art: React.ReactNode }[] = [
  { label: '样式', art: <path d="M5 23L22 3c1-2 6 0 4 4L11 23H3c-1 0 0-1 2-3M12 15l5 5M1 27h27" /> },
  { label: '选择窗格', art: <path d="M2 1l24 9-8 5 9 9-3 3-9-9-5 9z" /> },
  {
    label: '属性',
    art: (
      <>
        <path d="M0 8h5M12 8h16M0 20h16M24 20h4" />
        <ellipse cx="8.500" cy="8" rx="4" ry="5" />
        <ellipse cx="20" cy="20" rx="4" ry="5" />
      </>
    ),
  },
  {
    label: '智能工具',
    art: (
      <path d="M4 7l4-4 19 19c1 2-3 6-4 4zM8 11l4-4M23 1c0 3 1 4 4 5-3 1-4 2-4 5 0-3-1-4-4-5 3-1 4-2 4-5zM5 17c0 3 1 4 4 5-3 1-4 2-4 5 0-3-1-4-4-5 3-1 4-2 4-5z" />
    ),
  },
  {
    label: '帮助',
    art: (
      <>
        <circle cx="14" cy="14" r="13" />
        <path d="M9.500 11c0-6 9-6 9 0 0 3-4 3-4 7M14.500 20.500v2" />
      </>
    ),
  },
  {
    label: '翻译',
    art: (
      <>
        <path d="M2 11c0-5 3-7 9-7M8 1l4 3-4 4M26 17c0 5-3 7-9 7M20 20l-4 4 4 4" />
        <Glyph x={21} y={13} size={16}>A</Glyph>
        <Glyph x={7} y={26} size={14}>文</Glyph>
      </>
    ),
  },
  {
    label: '历史版本',
    art: <path d="M2 8C6 1 14 0 20 3s8 11 5 17-11 9-17 6-7-9-6-12M1 2v7h6M13 6v9l6 5" />,
  },
  {
    label: '稻壳',
    art: (
      <path d="M10 2H5L1 9l3 3 3-2v16h7M18 2h5l4 7-3 3M10 2c1 5 7 5 8 0M20 14l2 4 4 0-2 4 2 3-4-1-3 3-1-4-4-2 4-2zM23 24l4 4" />
    ),
  },
  {
    label: '更多',
    art: (
      <>
        <circle cx="3" cy="14" r="2.500" />
        <circle cx="14" cy="14" r="2.500" />
        <circle cx="25" cy="14" r="2.500" />
      </>
    ),
  },
];

const Rail = () => (
  <nav aria-label="侧边栏" className="flex w-[96px] shrink-0 flex-col items-center">
    <span className="mt-[40px] h-[3px] w-6 rounded-full bg-[#8f8f8f]" />
    <div className="mt-[27px] flex flex-col gap-[14px]">
      {railIcons.map((item, i) => (
        <button
          key={item.label}
          type="button"
          aria-label={item.label}
          className={clsx('flex size-14 items-center justify-center rounded-lg', i === 0 && 'bg-[#d5d2cf]')}
        >
          <Icon>{item.art}</Icon>
        </button>
      ))}
    </div>
  </nav>
);

/* ---------- status bar ---------- */

const views: { label: string; art: React.ReactNode; active?: boolean }[] = [
  { label: '页面视图', active: true, art: <path d="M4 2h20v24H4zM9 10h10M9 16h6" /> },
  { label: '大纲', art: <path d="M1 3h3M8 3h18M6 10h3M12 10h14M6 17h3M12 17h14M1 24h3M8 24h18" /> },
  { label: '阅读版式', art: <path d="M5 3l18 11L5 25z" /> },
  {
    label: 'Web版式',
    art: (
      <>
        <circle cx="14" cy="14" r="12" />
        <ellipse cx="14" cy="14" rx="6" ry="12" />
        <path d="M2 14h24" />
      </>
    ),
  },
  { label: '写作模式', art: <path d="M12 13L23 3c2-1 4 1 3 3L16 17M12 13l4 4c0 5-5 8-12 9 1-6 2-12 8-13zM4 26l6-6" /> },
];

const StatusBar = () => (
  <footer className="flex h-[43px] shrink-0 items-center border-t border-[#cfcfcf] bg-[#ececee] text-[21px] whitespace-nowrap text-[#333333]">
    <span className="ml-7">页面: 2/6</span>
    <VLine className="mx-[22px]" />
    <span>字数: 22/3867</span>
    <VLine className="mx-[22px]" />
    <button type="button" className="flex items-center gap-[10px]">
      拼写检查: 打开
      <Caret />
    </button>
    <VLine className="mr-[22px] ml-[25px]" />
    <button type="button">校对</button>
    <VLine className="mr-[27px] ml-[22px]" />
    <svg viewBox="0 0 22 20" className="mr-[10px] h-5 w-[22px]" aria-hidden="true">
      <path d="M11 1l10 18H1z" fill="#fbc25c" stroke="#fbc25c" strokeLinejoin="round" />
      <path d="M11 6v7M11 15v2" stroke="#7a5310" strokeWidth="2" />
    </svg>
    <button type="button">缺失字体</button>

    <div className="mr-[438px] ml-auto flex items-center">
      <button type="button" aria-label="护眼模式">
        <Icon>
          <path d="M1 14C7 3 21 3 27 14 21 25 7 25 1 14z" />
          <circle cx="14" cy="14" r="4" />
        </Icon>
      </button>
      <VLine className="mr-[14px] ml-[22px]" />
      <div className="flex gap-[14px]">
        {views.map((v) => (
          <button
            key={v.label}
            type="button"
            aria-label={v.label}
            className={clsx('flex h-[42px] w-[42px] items-center justify-center rounded-lg', v.active && 'bg-[#d8d8da]')}
          >
            <Icon className="size-[26px]">{v.art}</Icon>
          </button>
        ))}
      </div>
      <VLine className="mr-6 ml-3" />
      <button type="button" aria-label="最佳显示比例">
        <Icon className="size-[26px]">
          <path d="M1 7V2h6M21 2h6v5M27 21v5h-6M7 26H1v-5" />
          <rect x="7" y="7" width="14" height="14" rx="1" />
        </Icon>
      </button>
      <span className="ml-[35px] w-10 overflow-hidden text-[#44506b]">124%</span>
    </div>
  </footer>
);

const ImeBar = () => (
  <div className="fixed right-1 bottom-[3px] z-20 flex h-[53px] items-center rounded-xl border border-[#dddddd] bg-white pr-2 pl-[14px] shadow-md">
    <svg viewBox="0 0 32 30" className="h-[30px] w-8" aria-hidden="true">
      <path
        d="M27 4C20 1 8 3 7 9c-1 7 17 5 17 11 0 5-10 6-19 4"
        fill="none"
        stroke="#f0701c"
        strokeWidth="7"
        strokeLinecap="round"
      />
    </svg>
    <VLine className="mr-4 ml-[14px] h-8" />
    <button type="button" className="w-7 text-[26px] leading-none font-bold text-black">英</button>
    <button type="button" aria-label="中英文标点" className="ml-6">
      <svg viewBox="0 0 20 26" className="h-[26px] w-5" aria-hidden="true">
        <circle cx="5" cy="6" r="4" />
        <path d="M14 13a4 4 0 1 1 3 6c-1 3-3 5-5 5 2-2 3-4 2-6z" />
      </svg>
    </button>
    <button type="button" aria-label="语音输入" className="ml-6">
      <Icon stroke="#111111" width={2.200}>
        <rect x="9" y="1" width="10" height="17" rx="5" />
        <path d="M4 11c0 14 20 14 20 0M14 22v6" />
      </Icon>
    </button>
    <button type="button" aria-label="软键盘" className="ml-[26px]">
      <Icon stroke="#111111" width={2.200}>
        <rect x="1" y="2" width="26" height="24" rx="3" />
        <path d="M6 9h3M12.500 9h3M19 9h3M6 14h3M12.500 14h3M19 14h3M9 20h10" />
      </Icon>
    </button>
    <button type="button" aria-label="皮肤" className="ml-[24px]">
      <svg viewBox="0 0 32 28" className="h-7 w-8" aria-hidden="true">
        <defs>
          <linearGradient id="skin" x1="0" y1="1" x2="1" y2="0">
            <stop offset="0" stopColor="#ff2a12" />
            <stop offset="1" stopColor="#ff7a1c" />
          </linearGradient>
        </defs>
        <path d="M9 2c3 4 11 4 14 0l8 4v8l-5 1v12H6V15l-5-1V6z" fill="url(#skin)" />
      </svg>
    </button>
    <button type="button" aria-label="工具箱" className="ml-6">
      <Icon stroke="#111111" width={2.200}>
        <rect x="2" y="2" width="9" height="9" rx="1" />
        <circle cx="22" cy="6.500" r="5" />
        <rect x="2" y="17" width="9" height="9" rx="1" />
        <rect x="17" y="17" width="9" height="9" rx="1" />
      </Icon>
    </button>
    <button type="button" aria-label="智能助手" className="ml-[22px]">
      <svg viewBox="0 0 40 40" className="size-10" aria-hidden="true">
        <ellipse cx="19" cy="22" rx="17" ry="16" fill="#ffffff" stroke="#e8def2" />
        <path d="M8 8l5-5 3 5z" fill="#ffffff" stroke="#e8def2" />
        <path d="M2 17c8-6 18-6 27-4-1 7-5 9-10 8-2 0-3 2-6 2-6 1-10-1-11-6z" fill="#e9682a" />
        <ellipse cx="9" cy="18" rx="3" ry="2.500" fill="#222222" />
        <path d="M18 17c2-2 5-2 6 0M14 29c4 0 7-2 8-5" stroke="#222222" strokeWidth="2.500" fill="none" />
        <path d="M34 7c1 5 2 6 6 7-4 1-5 2-6 7-1-5-2-6-6-7 4-1 5-2 6-7z" fill="#ffe14a" />
      </svg>
    </button>
  </div>
);

export default function App() {
  return (
    <div className="flex h-screen flex-col overflow-hidden bg-linear-to-b from-[#ece9e7] via-[#ecebea] to-[#ebecef] font-['Noto_Sans','Noto_Sans_CJK_SC',sans-serif]">
      <TitleBar />
      <Ribbon />
      <div className="flex min-h-0 flex-1">
        <main className="flex min-w-0 flex-1 overflow-hidden pl-[104px]">
          <article className="grid flex-1 grid-cols-2 gap-10 overflow-hidden border-x border-[#cfcfcf] bg-white px-[134px] font-['Liberation_Serif','Noto_Sans_CJK_SC',serif] text-[29px] leading-[33px] text-black">
            <LeftColumn />
            <RightColumn />
          </article>
          <ScrollTrack />
        </main>
        <StylePane />
        <Rail />
      </div>
      <StatusBar />
      <ImeBar />
    </div>
  );
}
